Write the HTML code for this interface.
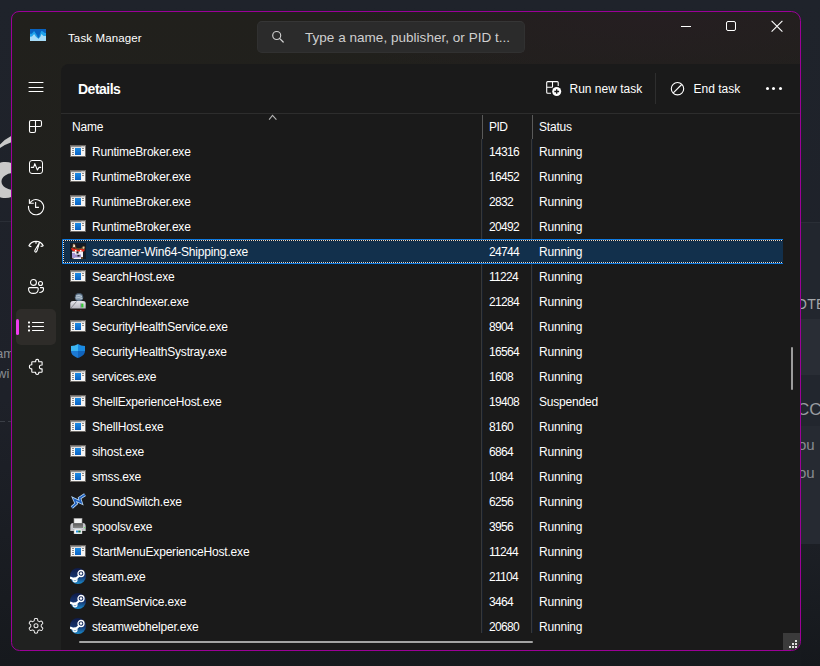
<!DOCTYPE html>
<html><head><meta charset="utf-8">
<style>
*{box-sizing:border-box;margin:0;padding:0}
html,body{width:820px;height:666px;overflow:hidden;background:#1b1e25;font-family:"Liberation Sans",sans-serif;color:#fff}
.abs{position:absolute}
#desk{position:absolute;left:0;top:0;width:820px;height:666px;background:linear-gradient(180deg,#1f232b 0%,#1e2129 60%,#16191d 100%)}
#win{position:absolute;left:11px;top:11px;width:790px;height:640px;border:1px solid #9c0098;border-radius:8px 9.5px 9.5px 8.5px;background:radial-gradient(ellipse 320px 90px at 640px 0px,rgba(38,30,34,0.9),rgba(38,30,34,0) 100%),linear-gradient(180deg,#21201c 0%,#20211e 50%,#202120 100%);overflow:hidden}
#content{position:absolute;left:49px;top:52px;width:740px;height:587px;background:#1a1a1a;border-top-left-radius:8px;overflow:hidden}
.txt{position:absolute;white-space:nowrap;font-size:12px;letter-spacing:-0.2px;line-height:25px}
.row{position:absolute;left:0;width:722px;height:25px}
.row .ic{position:absolute;left:9px;top:4px;width:16px;height:16px}
.row .ic svg{display:block}
.row span{position:absolute;top:1px;white-space:nowrap;font-size:12px;letter-spacing:-0.2px;line-height:25px;color:#fff}
.row .nm{left:31px}
.row .pid{left:428px;letter-spacing:-0.7px !important}
.row .st{left:478px}
.sel:before{content:"";position:absolute;left:1px;top:0;right:0;bottom:0;background:#12304c;border:1px solid #0f7ae0;border-right:none;border-radius:1.5px 0 0 1.5px}
.sel:after{content:"";position:absolute;left:2px;top:1px;right:0;bottom:1px;
 background:
 repeating-linear-gradient(90deg,#f2dcc4 0 1px,#07182c 1px 2px) top left/100% 1px no-repeat,
 repeating-linear-gradient(90deg,#f2dcc4 0 1px,#07182c 1px 2px) bottom left/100% 1px no-repeat,
 repeating-linear-gradient(180deg,#f2dcc4 0 1px,#07182c 1px 2px) top left/1px 100% no-repeat}
.nav{position:absolute}
.nav svg{display:block}
</style></head><body>
<div id="desk">
  <!-- left desktop bits -->
  <svg class="abs" style="left:0;top:0" width="12" height="666" viewBox="0 0 12 666">
    <path d="M0 144.5 Q5 139 12 135.5 V142 Q6 144 0 148Z" fill="#c9c9c9"/>
    <path fill-rule="evenodd" fill="#c9c9c9" d="M12 163.2 A18 18 0 1 0 12 196.8 Z M14 173 A12.5 8.5 0 1 0 14 190 A12.5 8.5 0 1 0 14 173Z"/>
    <rect x="0" y="221" width="12" height="1" fill="#2a2e36"/>
    <text x="-4" y="358" font-size="13" fill="#8a8d92" font-family="Liberation Sans">am</text>
    <text x="-3" y="378" font-size="13" fill="#8a8d92" font-family="Liberation Sans">wi</text>
    <rect x="0" y="421" width="5" height="1" fill="#3a3e46"/><rect x="8" y="421" width="3" height="1" fill="#3a3e46"/>
  </svg>
  <!-- right desktop bits -->
  <div class="abs" style="left:801px;top:222px;width:19px;height:1px;background:#2a2e36"></div>
  <div class="abs" style="left:801px;top:223px;width:19px;height:96px;background:#22262e"></div>
  <div class="abs" style="left:801px;top:319px;width:19px;height:56px;background:#292d35"></div>
  <div class="abs" style="left:801px;top:375px;width:19px;height:51px;background:#22262e"></div>
  <div class="abs" style="left:801px;top:426px;width:19px;height:118px;background:#262a32"></div>
  <div class="abs" style="left:801px;top:544px;width:19px;height:122px;background:linear-gradient(180deg,#1c1f25,#15181c)"></div>
  <div class="abs" style="left:796px;top:295.5px;font-size:14px;color:#a4a6aa;letter-spacing:0.3px;white-space:nowrap">OTE</div>
  <div class="abs" style="left:797px;top:400px;font-size:17px;color:#9a9ca0;white-space:nowrap">CC</div>
  <div class="abs" style="left:798px;top:436px;font-size:15px;color:#8a8c90;white-space:nowrap">ou</div>
  <div class="abs" style="left:798px;top:464px;font-size:15px;color:#8a8c90;white-space:nowrap">ou</div>
</div>

<div id="win">
  <!-- title bar -->
  <svg class="abs" style="left:18px;top:17px" width="16" height="12" viewBox="0 0 16 12">
    <rect width="16" height="12" fill="#0862c0"/>
    <path d="M0 4.8 L1.8 4.8 L4.1 1.9 L6.2 5 L8.5 8.7 L11.2 1.9 L12.6 2.3 L14.8 3.9 H16 V12 H0Z" fill="#1fa2ea"/>
    <path d="M5.8 4.6 L8.5 8.9 L10.6 4 L9.6 7.2 L8.5 10 Z" fill="#0a5cb0"/>
    <path d="M0 7.75 L2 7.5 L4.1 5.1 L6 7.8 L8.5 9.8 L10.5 7.5 L11.4 5.1 L13.6 7 L16 7 V12 H0Z" fill="#a6dcf8"/>
  </svg>
  <div class="txt" style="left:56px;top:18px;line-height:16px;font-size:11.5px;color:#fff;letter-spacing:0.12px">Task Manager</div>

  <div class="abs" style="left:245px;top:9px;width:268px;height:32px;border-radius:5px;background:#2b2b2b;border:1px solid #313131;border-top-color:#363636"></div>
  <svg class="abs" style="left:259px;top:18px" width="14" height="14" viewBox="0 0 14 14">
    <circle cx="5.7" cy="5.5" r="4" fill="none" stroke="#cfcfcf" stroke-width="1.15"/>
    <path d="M8.8 8.6 L12.2 12" stroke="#cfcfcf" stroke-width="1.3" stroke-linecap="round"/>
  </svg>
  <div class="txt" style="left:293px;top:18px;line-height:16px;font-size:13.5px;letter-spacing:0.03px;color:#cfcfcf">Type a name, publisher, or PID t...</div>

  <!-- window controls -->
  <div class="abs" style="left:669px;top:14px;width:10px;height:1px;background:#fff"></div>
  <div class="abs" style="left:714px;top:9px;width:10px;height:10px;border:1px solid #fff;border-radius:2px"></div>
  <svg class="abs" style="left:759px;top:8px" width="13" height="13" viewBox="0 0 13 13">
    <path d="M0.6 0.8 L11.4 11.6 M11.4 0.8 L0.6 11.6" stroke="#fff" stroke-width="1.1"/>
  </svg>

  <!-- nav -->
  <svg class="nav" style="left:16px;top:68px" width="16" height="14" viewBox="0 0 16 14">
    <path d="M1 2.5 H15 M1 7.5 H15 M1 11.5 H15" stroke="#fff" stroke-width="1.1" stroke-linecap="round"/>
  </svg>
  <svg class="nav" style="left:16px;top:107px" width="16" height="16" viewBox="0 0 16 16">
    <path d="M1.5 3 Q1.5 1.5 3 1.5 H12 Q13.5 1.5 13.5 3 V6 Q13.5 7.5 12 7.5 H7.5 V12 Q7.5 13.5 6 13.5 H3 Q1.5 13.5 1.5 12 Z M1.5 7.5 H7.5 M7.5 1.5 V7.5" fill="none" stroke="#fff" stroke-width="1.1"/>
  </svg>
  <svg class="nav" style="left:16px;top:147px" width="16" height="16" viewBox="0 0 16 16">
    <rect x="1.5" y="1.5" width="13" height="13" rx="2.5" fill="none" stroke="#fff" stroke-width="1"/>
    <path d="M3.3 8.4 H5.6 L6.8 4.6 L9.4 11 L11 8.4 H12.7" fill="none" stroke="#fff" stroke-width="1.1" stroke-linejoin="round" stroke-linecap="round"/>
  </svg>
  <svg class="nav" style="left:15px;top:187px" width="18" height="18" viewBox="0 0 18 18">
    <path d="M2.4 4.3 L4.54 2.1 A7.6 7.6 0 1 1 1.6 6.8" fill="none" stroke="#fff" stroke-width="1.1"/>
    <path d="M2.4 0.3 V4.3 H6.8" fill="none" stroke="#fff" stroke-width="1.1"/>
    <path d="M8.6 3.1 V8.4 H11.9" fill="none" stroke="#fff" stroke-width="1.1"/>
  </svg>
  <svg class="nav" style="left:16px;top:228px" width="17" height="14" viewBox="0 0 17 14">
    <path d="M0.8 6 A8 8 0 0 1 15.3 6" fill="none" stroke="#fff" stroke-width="1.2"/>
    <path d="M0.8 6 L3.4 6.6 M15.3 6 L12.6 6.3 M8 1.5 V3.8" stroke="#fff" stroke-width="1.2"/>
    <path d="M11.5 2.5 L9 10.8 Q8.4 12.4 7.3 12 Q6.4 11.6 6.9 10.3 Z" fill="none" stroke="#fff" stroke-width="1.1" stroke-linejoin="round"/>
  </svg>
  <svg class="nav" style="left:16px;top:266px" width="17" height="17" viewBox="0 0 17 17">
    <circle cx="5.45" cy="4.45" r="2.95" fill="none" stroke="#fff" stroke-width="1.1"/>
    <circle cx="12.5" cy="5.5" r="2" fill="none" stroke="#fff" stroke-width="1.1"/>
    <path d="M0.6 10.6 Q0.6 9.6 1.6 9.6 H9.2 Q10.2 9.6 10.2 10.6 V11.2 Q10.2 15.4 5.4 15.4 Q0.6 15.4 0.6 11.2 Z" fill="none" stroke="#fff" stroke-width="1.1"/>
    <path d="M12 9.6 H14.6 Q15.5 9.6 15.5 10.5 V11 Q15.5 14.3 11.3 14.5" fill="none" stroke="#fff" stroke-width="1.1"/>
  </svg>
  <!-- selected nav -->
  <div class="abs" style="left:4px;top:297px;width:40px;height:36px;border-radius:5px;background:#2e2c29"></div>
  <div class="abs" style="left:4px;top:307px;width:3px;height:16px;border-radius:2px;background:#f03df0"></div>
  <svg class="nav" style="left:15px;top:308px" width="18" height="14" viewBox="0 0 18 14">
    <rect x="1" y="1.5" width="2" height="2" rx="0.4" fill="#fff"/><rect x="1" y="5.5" width="2" height="2" rx="0.4" fill="#fff"/><rect x="1" y="9.5" width="2" height="2" rx="0.4" fill="#fff"/>
    <path d="M5.5 2.5 H16.5 M5.5 6.5 H16.5 M5.5 10.5 H16.5" stroke="#fff" stroke-width="1.1" stroke-linecap="round"/>
  </svg>
  <svg class="nav" style="left:16px;top:346px" width="16" height="18" viewBox="0 0 16 18">
    <path d="M4.3 3.7 H7.7 Q7.5 1.3 9.2 1.3 Q10.9 1.3 10.7 3.7 H13.6 Q14.1 3.7 14.1 4.2 V7 Q11.4 6.9 11.4 8.9 Q11.4 11 14.1 10.9 V13.7 Q14.1 14.2 13.6 14.2 H10.8 Q10.9 16.5 9.2 16.5 Q7.5 16.5 7.6 14.2 H4.3 Q3.8 14.2 3.8 13.7 V10.9 Q1.4 11 1.4 8.8 Q1.4 6.6 3.8 6.7 V4.2 Q3.8 3.7 4.3 3.7 Z" fill="none" stroke="#fff" stroke-width="1.1" stroke-linejoin="round"/>
  </svg>
  <svg class="nav" style="left:16px;top:606px" width="16" height="16" viewBox="0 0 16 16">
    <path d="M13.25 7.80 L13.25 7.53 L13.24 7.25 L13.28 6.96 L13.49 6.63 L14.09 6.17 L14.65 5.64 L14.78 5.20 L14.69 4.82 L14.55 4.46 L14.37 4.12 L14.16 3.80 L13.93 3.49 L13.64 3.23 L13.19 3.12 L12.45 3.35 L11.75 3.63 L11.36 3.65 L11.10 3.53 L10.86 3.39 L10.62 3.25 L10.39 3.12 L10.14 2.98 L9.91 2.81 L9.73 2.46 L9.63 1.71 L9.45 0.96 L9.14 0.63 L8.77 0.51 L8.38 0.46 L8.00 0.45 L7.62 0.46 L7.23 0.51 L6.86 0.63 L6.55 0.96 L6.37 1.71 L6.27 2.46 L6.09 2.81 L5.86 2.98 L5.61 3.12 L5.38 3.25 L5.14 3.39 L4.90 3.53 L4.64 3.65 L4.25 3.63 L3.55 3.35 L2.81 3.12 L2.36 3.23 L2.07 3.49 L1.84 3.80 L1.63 4.12 L1.45 4.46 L1.31 4.82 L1.22 5.20 L1.35 5.64 L1.91 6.17 L2.51 6.63 L2.72 6.96 L2.76 7.25 L2.75 7.53 L2.75 7.80 L2.75 8.07 L2.76 8.35 L2.72 8.64 L2.51 8.97 L1.91 9.43 L1.35 9.96 L1.22 10.40 L1.31 10.78 L1.45 11.14 L1.63 11.47 L1.84 11.80 L2.07 12.11 L2.36 12.37 L2.81 12.48 L3.55 12.25 L4.25 11.97 L4.64 11.95 L4.90 12.07 L5.14 12.21 L5.37 12.35 L5.61 12.48 L5.86 12.62 L6.09 12.79 L6.27 13.14 L6.37 13.89 L6.55 14.64 L6.86 14.97 L7.23 15.09 L7.62 15.14 L8.00 15.15 L8.38 15.14 L8.77 15.09 L9.14 14.97 L9.45 14.64 L9.63 13.89 L9.73 13.14 L9.91 12.79 L10.14 12.62 L10.39 12.48 L10.62 12.35 L10.86 12.21 L11.10 12.07 L11.36 11.95 L11.75 11.97 L12.45 12.25 L13.19 12.48 L13.64 12.37 L13.93 12.11 L14.16 11.80 L14.37 11.47 L14.55 11.14 L14.69 10.78 L14.78 10.40 L14.65 9.96 L14.09 9.43 L13.49 8.97 L13.28 8.64 L13.24 8.35 L13.25 8.07Z" fill="none" stroke="#e6e6e6" stroke-width="1.05" stroke-linejoin="round"/>
    <circle cx="8" cy="7.8" r="2" fill="none" stroke="#e6e6e6" stroke-width="1.05"/>
  </svg>

  <!-- content panel -->
  <div id="content">
    <div class="abs" style="left:17px;top:17px;font-size:14px;letter-spacing:-0.5px;font-weight:bold;line-height:16px;white-space:nowrap">Details</div>

    <svg class="abs" style="left:484px;top:16px" width="18" height="18" viewBox="0 0 18 18">
      <path d="M6 13.3 H2.7 Q1.7 13.3 1.7 12.3 V2.6 Q1.7 1.6 2.7 1.6 H12.2 Q13.2 1.6 13.2 2.6 V6 M1.7 7.3 H7.5 M7.5 1.6 V7.3" fill="none" stroke="#fff" stroke-width="1.1"/>
      <circle cx="11.7" cy="11.5" r="4.5" fill="#fff"/>
      <path d="M11.7 9.3 V13.8 M9.3 11.5 H14.1" stroke="#1a1a1a" stroke-width="1.3"/>
    </svg>
    <div class="txt" style="left:508.5px;top:17px;line-height:16px;font-size:12px;letter-spacing:0px">Run new task</div>
    <div class="abs" style="left:594px;top:9px;width:1px;height:31px;background:#2e2e2e"></div>
    <svg class="abs" style="left:608px;top:17px" width="16" height="16" viewBox="0 0 16 16">
      <circle cx="8.5" cy="7.7" r="6.2" fill="none" stroke="#fff" stroke-width="1.1"/>
      <path d="M4.3 11.9 L12.7 3.5" stroke="#fff" stroke-width="1.1"/>
    </svg>
    <div class="txt" style="left:632.5px;top:17px;line-height:16px;font-size:12px;letter-spacing:0px">End task</div>
    <div class="abs" style="left:704.8px;top:23.1px;width:3.2px;height:3.2px;border-radius:50%;background:#fff"></div>
    <div class="abs" style="left:711.3px;top:23.1px;width:3.2px;height:3.2px;border-radius:50%;background:#fff"></div>
    <div class="abs" style="left:717.8px;top:23.1px;width:3.2px;height:3.2px;border-radius:50%;background:#fff"></div>

    <div class="abs" style="left:0;top:49px;width:740px;height:1px;background:#2d2d2d"></div>
    <svg class="abs" style="left:207px;top:50px" width="9" height="6" viewBox="0 0 9 6">
      <path d="M1.1 5.6 L4.5 1.3 L8.4 5.7" fill="none" stroke="#b4b4b4" stroke-width="1.05"/>
    </svg>
    <div class="txt" style="left:11px;top:51px">Name</div>
    <div class="txt" style="left:428px;top:51px;letter-spacing:-0.6px">PID</div>
    <div class="txt" style="left:478px;top:51px">Status</div>
    <div class="abs" style="left:421px;top:51px;width:1px;height:24px;background:#5a5a5a"></div>
    <div class="abs" style="left:471px;top:51px;width:1px;height:24px;background:#5a5a5a"></div>
    <div class="abs" style="left:420px;top:75px;width:1px;height:494px;background:#383838"></div>
    <div class="abs" style="left:421px;top:75px;width:1px;height:494px;background:#171e29"></div>
    <div class="abs" style="left:470px;top:75px;width:1px;height:494px;background:#383838"></div>
    <div class="abs" style="left:471px;top:75px;width:1px;height:494px;background:#171e29"></div>

    <div class="abs" style="left:0;top:75px;width:722px;height:500px;overflow:hidden">
      <div class="abs" style="left:0;top:-139px;width:722px;height:800px">
<div class="row" style="top:139px"><div class="ic"><svg width="16" height="16" viewBox="0 0 16 16"><defs><linearGradient id="ab" x1="0" y1="0" x2="0" y2="1"><stop offset="0" stop-color="#1c8ce4"/><stop offset="1" stop-color="#0a62c4"/></linearGradient></defs><rect x="0.5" y="2.5" width="15" height="11" fill="#f6f6f6" stroke="#6e6a66"/><rect x="1" y="3" width="14" height="1.2" fill="#8e8e8e"/><rect x="11.6" y="3" width="1" height="1.2" fill="#e8e8e8"/><rect x="13.6" y="3" width="1" height="1.2" fill="#e8e8e8"/><rect x="5" y="5" width="6" height="7" fill="url(#ab)"/><rect x="2" y="5" width="2" height="1" fill="#8a8a8a"/><rect x="2" y="7" width="2" height="1" fill="#8a8a8a"/><rect x="2" y="9" width="2" height="1" fill="#8a8a8a"/><rect x="2" y="11" width="2" height="1" fill="#8a8a8a"/><rect x="12" y="5" width="2" height="1" fill="#8a8a8a"/><rect x="12" y="7" width="2" height="1" fill="#8a8a8a"/></svg></div><span class="nm">RuntimeBroker.exe</span><span class="pid">14316</span><span class="st">Running</span></div>
<div class="row" style="top:164px"><div class="ic"><svg width="16" height="16" viewBox="0 0 16 16"><defs><linearGradient id="ab" x1="0" y1="0" x2="0" y2="1"><stop offset="0" stop-color="#1c8ce4"/><stop offset="1" stop-color="#0a62c4"/></linearGradient></defs><rect x="0.5" y="2.5" width="15" height="11" fill="#f6f6f6" stroke="#6e6a66"/><rect x="1" y="3" width="14" height="1.2" fill="#8e8e8e"/><rect x="11.6" y="3" width="1" height="1.2" fill="#e8e8e8"/><rect x="13.6" y="3" width="1" height="1.2" fill="#e8e8e8"/><rect x="5" y="5" width="6" height="7" fill="url(#ab)"/><rect x="2" y="5" width="2" height="1" fill="#8a8a8a"/><rect x="2" y="7" width="2" height="1" fill="#8a8a8a"/><rect x="2" y="9" width="2" height="1" fill="#8a8a8a"/><rect x="2" y="11" width="2" height="1" fill="#8a8a8a"/><rect x="12" y="5" width="2" height="1" fill="#8a8a8a"/><rect x="12" y="7" width="2" height="1" fill="#8a8a8a"/></svg></div><span class="nm">RuntimeBroker.exe</span><span class="pid">16452</span><span class="st">Running</span></div>
<div class="row" style="top:189px"><div class="ic"><svg width="16" height="16" viewBox="0 0 16 16"><defs><linearGradient id="ab" x1="0" y1="0" x2="0" y2="1"><stop offset="0" stop-color="#1c8ce4"/><stop offset="1" stop-color="#0a62c4"/></linearGradient></defs><rect x="0.5" y="2.5" width="15" height="11" fill="#f6f6f6" stroke="#6e6a66"/><rect x="1" y="3" width="14" height="1.2" fill="#8e8e8e"/><rect x="11.6" y="3" width="1" height="1.2" fill="#e8e8e8"/><rect x="13.6" y="3" width="1" height="1.2" fill="#e8e8e8"/><rect x="5" y="5" width="6" height="7" fill="url(#ab)"/><rect x="2" y="5" width="2" height="1" fill="#8a8a8a"/><rect x="2" y="7" width="2" height="1" fill="#8a8a8a"/><rect x="2" y="9" width="2" height="1" fill="#8a8a8a"/><rect x="2" y="11" width="2" height="1" fill="#8a8a8a"/><rect x="12" y="5" width="2" height="1" fill="#8a8a8a"/><rect x="12" y="7" width="2" height="1" fill="#8a8a8a"/></svg></div><span class="nm">RuntimeBroker.exe</span><span class="pid">2832</span><span class="st">Running</span></div>
<div class="row" style="top:214px"><div class="ic"><svg width="16" height="16" viewBox="0 0 16 16"><defs><linearGradient id="ab" x1="0" y1="0" x2="0" y2="1"><stop offset="0" stop-color="#1c8ce4"/><stop offset="1" stop-color="#0a62c4"/></linearGradient></defs><rect x="0.5" y="2.5" width="15" height="11" fill="#f6f6f6" stroke="#6e6a66"/><rect x="1" y="3" width="14" height="1.2" fill="#8e8e8e"/><rect x="11.6" y="3" width="1" height="1.2" fill="#e8e8e8"/><rect x="13.6" y="3" width="1" height="1.2" fill="#e8e8e8"/><rect x="5" y="5" width="6" height="7" fill="url(#ab)"/><rect x="2" y="5" width="2" height="1" fill="#8a8a8a"/><rect x="2" y="7" width="2" height="1" fill="#8a8a8a"/><rect x="2" y="9" width="2" height="1" fill="#8a8a8a"/><rect x="2" y="11" width="2" height="1" fill="#8a8a8a"/><rect x="12" y="5" width="2" height="1" fill="#8a8a8a"/><rect x="12" y="7" width="2" height="1" fill="#8a8a8a"/></svg></div><span class="nm">RuntimeBroker.exe</span><span class="pid">20492</span><span class="st">Running</span></div>
<div class="row sel" style="top:239px"><div class="ic"><svg width="16" height="16" viewBox="0 0 16 16"><rect x="0" y="0" width="16" height="16" fill="#161b24"/><path d="M2 5 L3 0.5 L5 1 L6.5 5Z" fill="#6a4a2a"/><path d="M3 4 L3.5 1 L5 2 L5 4Z" fill="#e8e0d0"/><path d="M10.5 6 L13 3 L15 3.5 L14.5 6.5Z" fill="#7a5a30"/><path d="M12.5 5 L13.5 3.5 L14.5 4 L14 6Z" fill="#d8c8a8"/><rect x="5" y="5" width="6" height="2" fill="#5a4a28"/><path d="M1 5 L6 6 L8.5 7 L11 6 L15 6.5 L14 8.5 L10 9 L8 8.5 L5 9 L2 7.5Z" fill="#ee2a1a"/><rect x="2" y="8.5" width="11" height="7.5" fill="#f2eef6"/><rect x="2" y="10" width="3" height="5" fill="#a494d4"/><rect x="5" y="11.5" width="6" height="3" fill="#9a8ac8"/><rect x="6.5" y="8.5" width="2" height="2" fill="#111"/><rect x="7.5" y="12" width="2" height="1.5" fill="#222"/><rect x="11" y="14" width="2" height="2" fill="#6a4a2a"/><rect x="2" y="15" width="1.5" height="1" fill="#6a4a2a"/><rect x="5" y="7" width="1.5" height="1.5" fill="#fff"/><rect x="10" y="7" width="1.5" height="1.5" fill="#fff"/></svg></div><span class="nm">screamer-Win64-Shipping.exe</span><span class="pid">24744</span><span class="st">Running</span></div>
<div class="row" style="top:264px"><div class="ic"><svg width="16" height="16" viewBox="0 0 16 16"><defs><linearGradient id="ab" x1="0" y1="0" x2="0" y2="1"><stop offset="0" stop-color="#1c8ce4"/><stop offset="1" stop-color="#0a62c4"/></linearGradient></defs><rect x="0.5" y="2.5" width="15" height="11" fill="#f6f6f6" stroke="#6e6a66"/><rect x="1" y="3" width="14" height="1.2" fill="#8e8e8e"/><rect x="11.6" y="3" width="1" height="1.2" fill="#e8e8e8"/><rect x="13.6" y="3" width="1" height="1.2" fill="#e8e8e8"/><rect x="5" y="5" width="6" height="7" fill="url(#ab)"/><rect x="2" y="5" width="2" height="1" fill="#8a8a8a"/><rect x="2" y="7" width="2" height="1" fill="#8a8a8a"/><rect x="2" y="9" width="2" height="1" fill="#8a8a8a"/><rect x="2" y="11" width="2" height="1" fill="#8a8a8a"/><rect x="12" y="5" width="2" height="1" fill="#8a8a8a"/><rect x="12" y="7" width="2" height="1" fill="#8a8a8a"/></svg></div><span class="nm">SearchHost.exe</span><span class="pid">11224</span><span class="st">Running</span></div>
<div class="row" style="top:289px"><div class="ic"><svg width="16" height="16" viewBox="0 0 16 16"><defs><linearGradient id="ig" x1="0" y1="0" x2="0" y2="1"><stop offset="0" stop-color="#e4e4ea"/><stop offset="1" stop-color="#b8b8c0"/></linearGradient></defs><circle cx="9" cy="4.3" r="4" fill="#7a90a4"/><circle cx="9" cy="4.3" r="4" fill="none" stroke="#3a4a5c" stroke-width="0.8"/><path d="M6 3 Q9 2 12 3.5 M5.5 5 Q9 4 12.5 5.5" stroke="#d0dce6" stroke-width="0.8" fill="none"/><path d="M0.3 10 Q0.5 8 3 8 H13 Q15.7 8 15.7 10 V15.5 H0.3Z" fill="url(#ig)"/><path d="M1 15 L6.5 8.5" stroke="#8a8a90" stroke-width="1"/><rect x="11.2" y="10.6" width="2.2" height="3.8" fill="#30d030"/><rect x="10.6" y="10.4" width="0.6" height="4.2" fill="#6a5a8a"/></svg></div><span class="nm">SearchIndexer.exe</span><span class="pid">21284</span><span class="st">Running</span></div>
<div class="row" style="top:314px"><div class="ic"><svg width="16" height="16" viewBox="0 0 16 16"><defs><linearGradient id="ab" x1="0" y1="0" x2="0" y2="1"><stop offset="0" stop-color="#1c8ce4"/><stop offset="1" stop-color="#0a62c4"/></linearGradient></defs><rect x="0.5" y="2.5" width="15" height="11" fill="#f6f6f6" stroke="#6e6a66"/><rect x="1" y="3" width="14" height="1.2" fill="#8e8e8e"/><rect x="11.6" y="3" width="1" height="1.2" fill="#e8e8e8"/><rect x="13.6" y="3" width="1" height="1.2" fill="#e8e8e8"/><rect x="5" y="5" width="6" height="7" fill="url(#ab)"/><rect x="2" y="5" width="2" height="1" fill="#8a8a8a"/><rect x="2" y="7" width="2" height="1" fill="#8a8a8a"/><rect x="2" y="9" width="2" height="1" fill="#8a8a8a"/><rect x="2" y="11" width="2" height="1" fill="#8a8a8a"/><rect x="12" y="5" width="2" height="1" fill="#8a8a8a"/><rect x="12" y="7" width="2" height="1" fill="#8a8a8a"/></svg></div><span class="nm">SecurityHealthService.exe</span><span class="pid">8904</span><span class="st">Running</span></div>
<div class="row" style="top:339px"><div class="ic"><svg width="16" height="16" viewBox="0 0 16 16"><defs><clipPath id="shc"><path d="M8 1 C6.2 2.3 3.6 2.9 1 2.9 V8 C1 11.5 4 13.6 8 15 C12 13.6 15 11.5 15 8 V2.9 C12.4 2.9 9.8 2.3 8 1Z"/></clipPath></defs><g clip-path="url(#shc)"><rect x="0" y="0" width="8" height="8" fill="#3db6f2"/><rect x="8" y="0" width="8" height="8" fill="#1a8ae2"/><rect x="0" y="8" width="8" height="8" fill="#1c7ad4"/><rect x="8" y="8" width="8" height="8" fill="#1164bc"/></g></svg></div><span class="nm">SecurityHealthSystray.exe</span><span class="pid">16564</span><span class="st">Running</span></div>
<div class="row" style="top:364px"><div class="ic"><svg width="16" height="16" viewBox="0 0 16 16"><defs><linearGradient id="ab" x1="0" y1="0" x2="0" y2="1"><stop offset="0" stop-color="#1c8ce4"/><stop offset="1" stop-color="#0a62c4"/></linearGradient></defs><rect x="0.5" y="2.5" width="15" height="11" fill="#f6f6f6" stroke="#6e6a66"/><rect x="1" y="3" width="14" height="1.2" fill="#8e8e8e"/><rect x="11.6" y="3" width="1" height="1.2" fill="#e8e8e8"/><rect x="13.6" y="3" width="1" height="1.2" fill="#e8e8e8"/><rect x="5" y="5" width="6" height="7" fill="url(#ab)"/><rect x="2" y="5" width="2" height="1" fill="#8a8a8a"/><rect x="2" y="7" width="2" height="1" fill="#8a8a8a"/><rect x="2" y="9" width="2" height="1" fill="#8a8a8a"/><rect x="2" y="11" width="2" height="1" fill="#8a8a8a"/><rect x="12" y="5" width="2" height="1" fill="#8a8a8a"/><rect x="12" y="7" width="2" height="1" fill="#8a8a8a"/></svg></div><span class="nm">services.exe</span><span class="pid">1608</span><span class="st">Running</span></div>
<div class="row" style="top:389px"><div class="ic"><svg width="16" height="16" viewBox="0 0 16 16"><defs><linearGradient id="ab" x1="0" y1="0" x2="0" y2="1"><stop offset="0" stop-color="#1c8ce4"/><stop offset="1" stop-color="#0a62c4"/></linearGradient></defs><rect x="0.5" y="2.5" width="15" height="11" fill="#f6f6f6" stroke="#6e6a66"/><rect x="1" y="3" width="14" height="1.2" fill="#8e8e8e"/><rect x="11.6" y="3" width="1" height="1.2" fill="#e8e8e8"/><rect x="13.6" y="3" width="1" height="1.2" fill="#e8e8e8"/><rect x="5" y="5" width="6" height="7" fill="url(#ab)"/><rect x="2" y="5" width="2" height="1" fill="#8a8a8a"/><rect x="2" y="7" width="2" height="1" fill="#8a8a8a"/><rect x="2" y="9" width="2" height="1" fill="#8a8a8a"/><rect x="2" y="11" width="2" height="1" fill="#8a8a8a"/><rect x="12" y="5" width="2" height="1" fill="#8a8a8a"/><rect x="12" y="7" width="2" height="1" fill="#8a8a8a"/></svg></div><span class="nm">ShellExperienceHost.exe</span><span class="pid">19408</span><span class="st">Suspended</span></div>
<div class="row" style="top:414px"><div class="ic"><svg width="16" height="16" viewBox="0 0 16 16"><defs><linearGradient id="ab" x1="0" y1="0" x2="0" y2="1"><stop offset="0" stop-color="#1c8ce4"/><stop offset="1" stop-color="#0a62c4"/></linearGradient></defs><rect x="0.5" y="2.5" width="15" height="11" fill="#f6f6f6" stroke="#6e6a66"/><rect x="1" y="3" width="14" height="1.2" fill="#8e8e8e"/><rect x="11.6" y="3" width="1" height="1.2" fill="#e8e8e8"/><rect x="13.6" y="3" width="1" height="1.2" fill="#e8e8e8"/><rect x="5" y="5" width="6" height="7" fill="url(#ab)"/><rect x="2" y="5" width="2" height="1" fill="#8a8a8a"/><rect x="2" y="7" width="2" height="1" fill="#8a8a8a"/><rect x="2" y="9" width="2" height="1" fill="#8a8a8a"/><rect x="2" y="11" width="2" height="1" fill="#8a8a8a"/><rect x="12" y="5" width="2" height="1" fill="#8a8a8a"/><rect x="12" y="7" width="2" height="1" fill="#8a8a8a"/></svg></div><span class="nm">ShellHost.exe</span><span class="pid">8160</span><span class="st">Running</span></div>
<div class="row" style="top:439px"><div class="ic"><svg width="16" height="16" viewBox="0 0 16 16"><defs><linearGradient id="ab" x1="0" y1="0" x2="0" y2="1"><stop offset="0" stop-color="#1c8ce4"/><stop offset="1" stop-color="#0a62c4"/></linearGradient></defs><rect x="0.5" y="2.5" width="15" height="11" fill="#f6f6f6" stroke="#6e6a66"/><rect x="1" y="3" width="14" height="1.2" fill="#8e8e8e"/><rect x="11.6" y="3" width="1" height="1.2" fill="#e8e8e8"/><rect x="13.6" y="3" width="1" height="1.2" fill="#e8e8e8"/><rect x="5" y="5" width="6" height="7" fill="url(#ab)"/><rect x="2" y="5" width="2" height="1" fill="#8a8a8a"/><rect x="2" y="7" width="2" height="1" fill="#8a8a8a"/><rect x="2" y="9" width="2" height="1" fill="#8a8a8a"/><rect x="2" y="11" width="2" height="1" fill="#8a8a8a"/><rect x="12" y="5" width="2" height="1" fill="#8a8a8a"/><rect x="12" y="7" width="2" height="1" fill="#8a8a8a"/></svg></div><span class="nm">sihost.exe</span><span class="pid">6864</span><span class="st">Running</span></div>
<div class="row" style="top:464px"><div class="ic"><svg width="16" height="16" viewBox="0 0 16 16"><defs><linearGradient id="ab" x1="0" y1="0" x2="0" y2="1"><stop offset="0" stop-color="#1c8ce4"/><stop offset="1" stop-color="#0a62c4"/></linearGradient></defs><rect x="0.5" y="2.5" width="15" height="11" fill="#f6f6f6" stroke="#6e6a66"/><rect x="1" y="3" width="14" height="1.2" fill="#8e8e8e"/><rect x="11.6" y="3" width="1" height="1.2" fill="#e8e8e8"/><rect x="13.6" y="3" width="1" height="1.2" fill="#e8e8e8"/><rect x="5" y="5" width="6" height="7" fill="url(#ab)"/><rect x="2" y="5" width="2" height="1" fill="#8a8a8a"/><rect x="2" y="7" width="2" height="1" fill="#8a8a8a"/><rect x="2" y="9" width="2" height="1" fill="#8a8a8a"/><rect x="2" y="11" width="2" height="1" fill="#8a8a8a"/><rect x="12" y="5" width="2" height="1" fill="#8a8a8a"/><rect x="12" y="7" width="2" height="1" fill="#8a8a8a"/></svg></div><span class="nm">smss.exe</span><span class="pid">1084</span><span class="st">Running</span></div>
<div class="row" style="top:489px"><div class="ic"><svg width="16" height="16" viewBox="0 0 16 16"><path d="M1.8 14.5 L6.2 10.6 L4.3 6.3 L11 9.5 L9.6 5.2 L15 1.6" fill="none" stroke="#b4d4f0" stroke-width="3.2" stroke-linejoin="miter"/><path d="M1.8 14.5 L6.2 10.6 L4.3 6.3 L11 9.5 L9.6 5.2 L15 1.6" fill="none" stroke="#1f5fbf" stroke-width="1.6"/></svg></div><span class="nm">SoundSwitch.exe</span><span class="pid">6256</span><span class="st">Running</span></div>
<div class="row" style="top:514px"><div class="ic"><svg width="16" height="16" viewBox="0 0 16 16"><defs><linearGradient id="pg" x1="0" y1="0" x2="0" y2="1"><stop offset="0" stop-color="#5a5a5a"/><stop offset="1" stop-color="#8a8a8a"/></linearGradient></defs><rect x="4" y="0.3" width="8" height="5" fill="#f4f4f4" stroke="#9a9a9a" stroke-width="0.6"/><path d="M0.3 13 V8 Q0.5 5 3 5 H13 Q15.5 5 15.7 8 V13Z" fill="#c4c4c8"/><rect x="3" y="5.2" width="10" height="5" fill="url(#pg)"/><rect x="3" y="10.2" width="10" height="0.8" fill="#dfe6f0"/><rect x="14" y="9" width="1.2" height="1.2" fill="#70e070"/><rect x="4" y="11" width="8" height="5" fill="#fafafa" stroke="#a0a0a0" stroke-width="0.5"/><rect x="6" y="12.5" width="2" height="2" fill="#2090e0"/><rect x="8.2" y="12.5" width="2.5" height="2" fill="#106a40"/></svg></div><span class="nm">spoolsv.exe</span><span class="pid">3956</span><span class="st">Running</span></div>
<div class="row" style="top:539px"><div class="ic"><svg width="16" height="16" viewBox="0 0 16 16"><defs><linearGradient id="ab" x1="0" y1="0" x2="0" y2="1"><stop offset="0" stop-color="#1c8ce4"/><stop offset="1" stop-color="#0a62c4"/></linearGradient></defs><rect x="0.5" y="2.5" width="15" height="11" fill="#f6f6f6" stroke="#6e6a66"/><rect x="1" y="3" width="14" height="1.2" fill="#8e8e8e"/><rect x="11.6" y="3" width="1" height="1.2" fill="#e8e8e8"/><rect x="13.6" y="3" width="1" height="1.2" fill="#e8e8e8"/><rect x="5" y="5" width="6" height="7" fill="url(#ab)"/><rect x="2" y="5" width="2" height="1" fill="#8a8a8a"/><rect x="2" y="7" width="2" height="1" fill="#8a8a8a"/><rect x="2" y="9" width="2" height="1" fill="#8a8a8a"/><rect x="2" y="11" width="2" height="1" fill="#8a8a8a"/><rect x="12" y="5" width="2" height="1" fill="#8a8a8a"/><rect x="12" y="7" width="2" height="1" fill="#8a8a8a"/></svg></div><span class="nm">StartMenuExperienceHost.exe</span><span class="pid">11244</span><span class="st">Running</span></div>
<div class="row" style="top:564px"><div class="ic"><svg width="16" height="16" viewBox="0 0 16 16"><defs><linearGradient id="sg" x1="0" y1="0" x2="0" y2="1"><stop offset="0" stop-color="#0e1a46"/><stop offset="0.55" stop-color="#16346e"/><stop offset="1" stop-color="#1a8ed0"/></linearGradient></defs><circle cx="8" cy="8" r="8" fill="url(#sg)"/><circle cx="11" cy="5.5" r="3" fill="none" stroke="#fff" stroke-width="1.3"/><circle cx="11" cy="5.5" r="1.3" fill="#fff"/><path d="M0 9.5 L5 11.5 L9.5 7.5" stroke="#fff" stroke-width="2.2" fill="none"/><circle cx="5" cy="11.8" r="2" fill="none" stroke="#fff" stroke-width="1.2"/></svg></div><span class="nm">steam.exe</span><span class="pid">21104</span><span class="st">Running</span></div>
<div class="row" style="top:589px"><div class="ic"><svg width="16" height="16" viewBox="0 0 16 16"><defs><linearGradient id="sg" x1="0" y1="0" x2="0" y2="1"><stop offset="0" stop-color="#0e1a46"/><stop offset="0.55" stop-color="#16346e"/><stop offset="1" stop-color="#1a8ed0"/></linearGradient></defs><circle cx="8" cy="8" r="8" fill="url(#sg)"/><circle cx="11" cy="5.5" r="3" fill="none" stroke="#fff" stroke-width="1.3"/><circle cx="11" cy="5.5" r="1.3" fill="#fff"/><path d="M0 9.5 L5 11.5 L9.5 7.5" stroke="#fff" stroke-width="2.2" fill="none"/><circle cx="5" cy="11.8" r="2" fill="none" stroke="#fff" stroke-width="1.2"/></svg></div><span class="nm">SteamService.exe</span><span class="pid">3464</span><span class="st">Running</span></div>
<div class="row" style="top:614px"><div class="ic"><svg width="16" height="16" viewBox="0 0 16 16"><defs><linearGradient id="sg" x1="0" y1="0" x2="0" y2="1"><stop offset="0" stop-color="#0e1a46"/><stop offset="0.55" stop-color="#16346e"/><stop offset="1" stop-color="#1a8ed0"/></linearGradient></defs><circle cx="8" cy="8" r="8" fill="url(#sg)"/><circle cx="11" cy="5.5" r="3" fill="none" stroke="#fff" stroke-width="1.3"/><circle cx="11" cy="5.5" r="1.3" fill="#fff"/><path d="M0 9.5 L5 11.5 L9.5 7.5" stroke="#fff" stroke-width="2.2" fill="none"/><circle cx="5" cy="11.8" r="2" fill="none" stroke="#fff" stroke-width="1.2"/></svg></div><span class="nm">steamwebhelper.exe</span><span class="pid">20680</span><span class="st">Running</span></div>
      </div>
    </div>

    <div class="abs" style="left:730px;top:283px;width:2px;height:43px;border-radius:1px;background:#9c9c9c"></div>
    <div class="abs" style="left:18px;top:577px;width:454px;height:2px;border-radius:1px;background:#a4a4a4"></div>
    <div class="abs" style="left:722px;top:569px;width:18px;height:18px;background:#3b3b3b"></div>
    <svg class="abs" style="left:722px;top:569px" width="18" height="18" viewBox="0 0 18 18">
      <rect x="12" y="7" width="2" height="2" fill="#e0e0e0"/>
      <rect x="9" y="10" width="2" height="2" fill="#e0e0e0"/><rect x="12" y="10" width="2" height="2" fill="#e0e0e0"/>
      <rect x="6" y="13" width="2" height="2" fill="#e0e0e0"/><rect x="9" y="13" width="2" height="2" fill="#e0e0e0"/><rect x="12" y="13" width="2" height="2" fill="#e0e0e0"/>
    </svg>
  </div>
</div>
</body></html>
